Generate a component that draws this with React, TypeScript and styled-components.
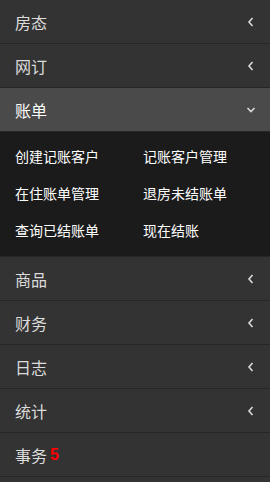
import React, { FC } from 'react'
import styled, { createGlobalStyle } from 'styled-components'

const GlobalStyle = createGlobalStyle`
  html, body {
    margin: 0;
    padding: 0;
    background: #333333;
  }
  body {
    font-family: "Liberation Sans", "Noto Sans CJK SC", sans-serif;
  }
`

interface MenuItem {
  name: string
  badge?: string
  sub?: string[]
  open?: boolean
}

const MENU: MenuItem[] = [
  { name: '房态' },
  { name: '网订' },
  {
    name: '账单',
    open: true,
    sub: ['创建记账客户', '记账客户管理', '在住账单管理', '退房未结账单', '查询已结账单', '现在结账'],
  },
  { name: '商品' },
  { name: '财务' },
  { name: '日志' },
  { name: '统计' },
  { name: '事务', badge: '5' },
]

const Chevron: FC<{ open?: boolean }> = ({ open }) => (
  <S.Icon width="10" height="10" viewBox="0 0 10 10">
    {open ? (
      <polyline points="1.5,3 5,6.5 8.5,3" fill="none" stroke="#d8d8d8" strokeWidth="1.6" />
    ) : (
      <polyline points="6.5,1 3,5 6.5,9" fill="none" stroke="#d8d8d8" strokeWidth="1.6" />
    )}
  </S.Icon>
)

const App: FC = () => (
  <>
    <GlobalStyle />
    <S.Nav>
      {MENU.map((item) => (
        <S.Group key={item.name}>
          <S.Row open={item.open}>
            <S.Label>
              {item.name}
              {item.badge && <S.Badge>{item.badge}</S.Badge>}
            </S.Label>
            {!item.badge && <Chevron open={item.open} />}
          </S.Row>
          {item.sub && (
            <S.Sub>
              {item.sub.map((s) => (
                <S.SubLink key={s}>{s}</S.SubLink>
              ))}
            </S.Sub>
          )}
        </S.Group>
      ))}
    </S.Nav>
  </>
)

const S = {
  Nav: styled.nav`
    width: 270px;
    display: flex;
    flex-direction: column;
    background: #333333;
  `,
  Group: styled.div`
    display: flex;
    flex-direction: column;
  `,
  Row: styled.div<{ open?: boolean }>`
    height: 43px;
    display: flex;
    align-items: center;
    justify-content: space-between;
    padding: 0 14px 0 15px;
    background: ${(p) => (p.open ? '#4a4a4a' : '#333333')};
    border-bottom: 1px solid #262626;
    color: ${(p) => (p.open ? '#ffffff' : '#dcdcdc')};
    font-size: 16px;
  `,
  Label: styled.span`
    display: flex;
    align-items: center;
    gap: 3px;
    font-family: "Noto Sans CJK SC", sans-serif;
  `,
  Badge: styled.span`
    color: #ff0000;
    font-family: "Liberation Sans", sans-serif;
    font-weight: bold;
    font-size: 16px;
  `,
  Icon: styled.svg`
    display: block;
  `,
  Sub: styled.div`
    display: grid;
    grid-template-columns: 128px 1fr;
    grid-auto-rows: 37px;
    align-items: center;
    padding: 5px 15px 8px;
    background: #1b1b1b;
    border-bottom: 1px solid #262626;
  `,
  SubLink: styled.span`
    color: #ffffff;
    font-size: 14px;
    font-family: "Noto Sans CJK SC", sans-serif;
  `,
}

export default App
